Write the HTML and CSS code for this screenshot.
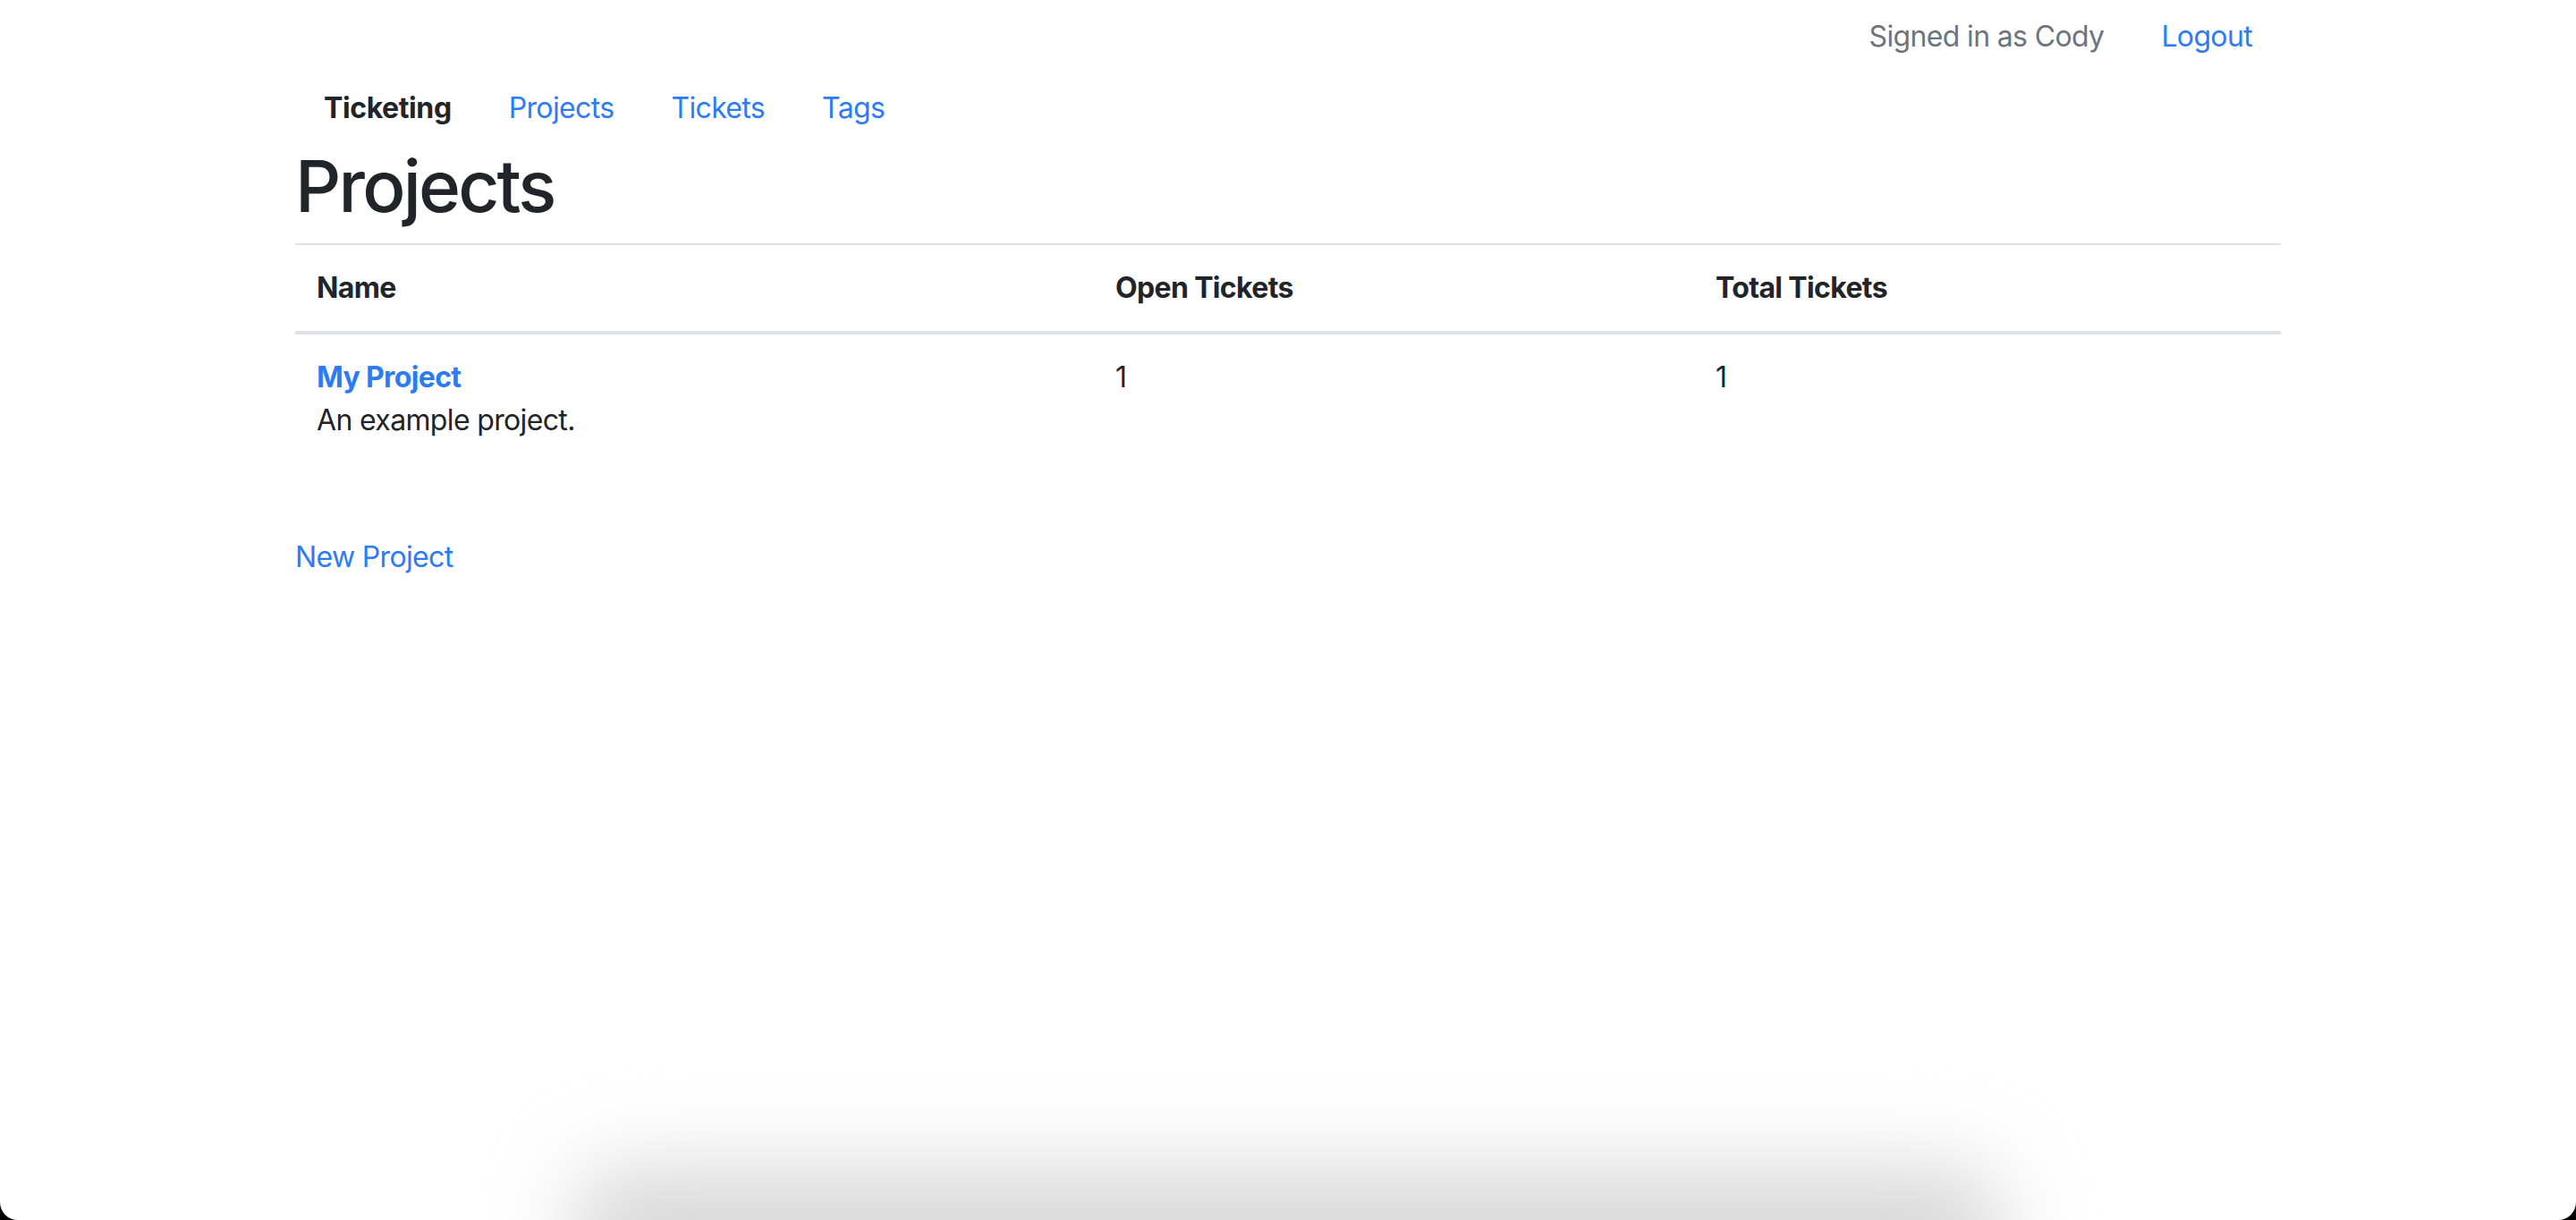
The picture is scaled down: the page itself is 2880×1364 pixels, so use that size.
FILE: index.html
```html
<!DOCTYPE html>
<html lang="en">
<head>
<meta charset="utf-8">
<title>Projects</title>
<link rel="stylesheet" href="styles.css">
</head>
<body>
<div class="window">
  <div class="container">
    <ul class="nav nav-end">
      <li><span class="nav-link muted">Signed in as Cody</span></li>
      <li><a class="nav-link" href="#">Logout</a></li>
    </ul>
    <ul class="nav">
      <li><a class="nav-link brand" href="#">Ticketing</a></li>
      <li><a class="nav-link" href="#">Projects</a></li>
      <li><a class="nav-link" href="#">Tickets</a></li>
      <li><a class="nav-link" href="#">Tags</a></li>
    </ul>
    <h1 class="title">Projects</h1>
    <table class="table">
      <thead>
        <tr>
          <th class="col-name">Name</th>
          <th class="col-open">Open Tickets</th>
          <th class="col-total">Total Tickets</th>
        </tr>
      </thead>
      <tbody>
        <tr>
          <td>
            <a class="project-link" href="#">My Project</a>
            <p class="desc">An example project.</p>
          </td>
          <td>1</td>
          <td>1</td>
        </tr>
      </tbody>
    </table>
    <a class="new-link" href="#">New Project</a>
  </div>
  <div class="dock-shadow"></div>
</div>
</body>
</html>
```

FILE: styles.css
```css
html {
  background: #000;
}
body {
  margin: 0;
  font-family: Inter, "Noto Sans", "Liberation Sans", sans-serif;
  font-size: 32px;
  line-height: 48px;
  letter-spacing: -0.65px;
  color: #212529;
}
.window {
  position: relative;
  overflow: hidden;
  background: #fff;
  height: 1364px;
  border-radius: 0 0 20px 20px;
}
.container {
  max-width: 2220px;
  margin: 0 auto;
  padding: 0 30px;
}
a {
  color: #2d7bf6;
  text-decoration: none;
}
.nav {
  display: flex;
  list-style: none;
  margin: 0;
  padding: 0;
}
.nav-end {
  justify-content: flex-end;
}
.nav-link {
  display: block;
  padding: 17px 32px 15px;
}
.muted {
  color: #6c757d;
}
.brand {
  color: #212529;
  font-weight: 700;
  letter-spacing: -0.4px;
}
.title {
  margin: 0 0 16px;
  font-size: 80px;
  line-height: 96px;
  font-weight: 500;
  letter-spacing: -2.8px;
}
.table {
  width: 100%;
  table-layout: fixed;
  border-collapse: collapse;
  margin-bottom: 32px;
}
.table th,
.table td {
  padding: 24px;
  text-align: left;
  vertical-align: top;
  border-top: 2px solid #dee2e6;
}
.table thead th {
  border-bottom: 4px solid #dee2e6;
  font-weight: 700;
}
.col-name {
  width: 845px;
}
.col-open {
  width: 623px;
}
.project-link {
  font-weight: 700;
}
.desc {
  margin: 0 0 32px;
}
.new-link {
  display: inline-block;
  margin-top: 17px;
}
.dock-shadow {
  position: absolute;
  left: 640px;
  width: 1600px;
  bottom: -100px;
  height: 160px;
  background: #d9d9d9;
  border-radius: 60px;
  filter: blur(45px);
}
```
